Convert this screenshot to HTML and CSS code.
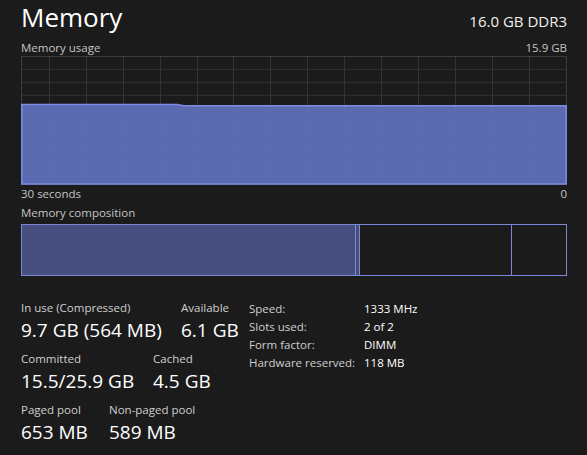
FILE: index.html
```html
<!DOCTYPE html>
<html>
<head>
<meta charset="utf-8">
<link rel="stylesheet" href="styles.css">
</head>
<body>
<div class="page">
  <div class="header">
    <div class="title">Memory</div>
    <div class="spec">16.0 GB DDR3</div>
  </div>
  <div class="caption-row">
    <span>Memory usage</span>
    <span>15.9 GB</span>
  </div>
  <svg class="graph" width="546" height="129" viewBox="0 0 546 129">
    <g stroke="#343434" stroke-width="1">
      <line x1="0" y1="13.3" x2="546" y2="13.3"/>
      <line x1="0" y1="26.3" x2="546" y2="26.3"/>
      <line x1="0" y1="39.3" x2="546" y2="39.3"/>
      <line x1="0" y1="52.3" x2="546" y2="52.3"/>
      <line x1="0" y1="65.3" x2="546" y2="65.3"/>
      <line x1="0" y1="78.3" x2="546" y2="78.3"/>
      <line x1="0" y1="91.3" x2="546" y2="91.3"/>
      <line x1="0" y1="104.3" x2="546" y2="104.3"/>
      <line x1="0" y1="117.3" x2="546" y2="117.3"/>
      <line x1="28.5" y1="0" x2="28.5" y2="129"/>
      <line x1="65.5" y1="0" x2="65.5" y2="129"/>
      <line x1="102.5" y1="0" x2="102.5" y2="129"/>
      <line x1="139.5" y1="0" x2="139.5" y2="129"/>
      <line x1="176.5" y1="0" x2="176.5" y2="129"/>
      <line x1="212.5" y1="0" x2="212.5" y2="129"/>
      <line x1="249.5" y1="0" x2="249.5" y2="129"/>
      <line x1="286.5" y1="0" x2="286.5" y2="129"/>
      <line x1="323.5" y1="0" x2="323.5" y2="129"/>
      <line x1="360.5" y1="0" x2="360.5" y2="129"/>
      <line x1="397.5" y1="0" x2="397.5" y2="129"/>
      <line x1="434.5" y1="0" x2="434.5" y2="129"/>
      <line x1="471.5" y1="0" x2="471.5" y2="129"/>
      <line x1="508.5" y1="0" x2="508.5" y2="129"/>
    </g>
    <rect x="0.5" y="0.5" width="545" height="128" fill="none" stroke="#3c3c3c"/>
    <polygon points="0.8,48.6 156,48.6 163,49.8 545.2,49.8 545.2,128 0.8,128" fill="#6170bd" fill-opacity="0.93" stroke="#7d8be2" stroke-width="1.5"/>
  </svg>
  <div class="caption-row axis">
    <span>30 seconds</span>
    <span>0</span>
  </div>
  <div class="caption-row comp-label">
    <span>Memory composition</span>
  </div>
  <div class="comp">
    <div class="seg inuse"></div>
    <div class="seg modified"></div>
    <div class="seg standby"></div>
    <div class="seg free"></div>
  </div>
  <div class="stats">
    <div class="left">
      <div class="row">
        <div class="stat w1">
          <div class="label">In use (Compressed)</div>
          <div class="value">9.7 GB (564 MB)</div>
        </div>
        <div class="stat">
          <div class="label">Available</div>
          <div class="value">6.1 GB</div>
        </div>
      </div>
      <div class="row">
        <div class="stat w2">
          <div class="label">Committed</div>
          <div class="value">15.5/25.9 GB</div>
        </div>
        <div class="stat">
          <div class="label">Cached</div>
          <div class="value">4.5 GB</div>
        </div>
      </div>
      <div class="row">
        <div class="stat w3">
          <div class="label">Paged pool</div>
          <div class="value">653 MB</div>
        </div>
        <div class="stat">
          <div class="label">Non-paged pool</div>
          <div class="value">589 MB</div>
        </div>
      </div>
    </div>
    <div class="props">
      <div class="prop"><span class="pk">Speed:</span><span class="pv">1333 MHz</span></div>
      <div class="prop"><span class="pk">Slots used:</span><span class="pv">2 of 2</span></div>
      <div class="prop"><span class="pk">Form factor:</span><span class="pv">DIMM</span></div>
      <div class="prop"><span class="pk">Hardware reserved:</span><span class="pv">118 MB</span></div>
    </div>
  </div>
</div>
</body>
</html>
```
FILE: styles.css
```css
html, body {
  margin: 0;
  padding: 0;
  background: #1b1b1b;
}
body {
  font-family: "Open Sans", "Noto Sans", sans-serif;
  color: #ffffff;
  width: 587px;
  height: 455px;
  overflow: hidden;
}
.page {
  padding: 0 20px 0 21px;
}
.header {
  display: flex;
  justify-content: space-between;
  align-items: baseline;
}
.title {
  font-size: 26px;
  line-height: 34px;
  color: #ffffff;
}
.spec {
  font-size: 15px;
  line-height: 20px;
  color: #f0f0f0;
}
.caption-row {
  display: flex;
  justify-content: space-between;
  font-size: 11.5px;
  line-height: 16px;
  height: 16px;
  color: #c4c4c4;
  margin-top: 6px;
  width: 546px;
}
.graph {
  display: block;
  margin-top: 0;
}
.caption-row.axis {
  margin-top: 1px;
}
.caption-row.comp-label {
  margin-top: 3px;
}
.comp {
  display: flex;
  margin-top: 3px;
  width: 546px;
  height: 52px;
  box-sizing: border-box;
  border: 1px solid #7b87d9;
}
.seg {
  height: 100%;
  box-sizing: border-box;
}
.inuse {
  width: 334px;
  background: #464f7e;
  border-right: 1px solid #7b87d9;
}
.modified {
  width: 4px;
  background: #464f7e;
  border-right: 1px solid #7b87d9;
}
.standby {
  width: 152px;
  border-right: 1px solid #7b87d9;
}
.free {
  flex: 1;
}
.stats {
  display: flex;
  margin-top: 23px;
}
.left {
  width: 228px;
  display: flex;
  flex-direction: column;
  gap: 7px;
}
.row {
  display: flex;
}
.stat .label {
  font-size: 11.5px;
  line-height: 18px;
  color: #cfcfcf;
  white-space: nowrap;
}
.stat .value {
  font-size: 19px;
  line-height: 26px;
  color: #ffffff;
  white-space: nowrap;
}
.w1 { width: 160px; }
.w2 { width: 132px; }
.w3 { width: 88px; }
.props {
  display: flex;
  flex-direction: column;
  font-size: 11.5px;
  line-height: 18px;
  margin-top: 1px;
}
.prop {
  display: flex;
}
.pk {
  width: 115px;
  color: #cfcfcf;
}
.pv {
  color: #ffffff;
}
```
